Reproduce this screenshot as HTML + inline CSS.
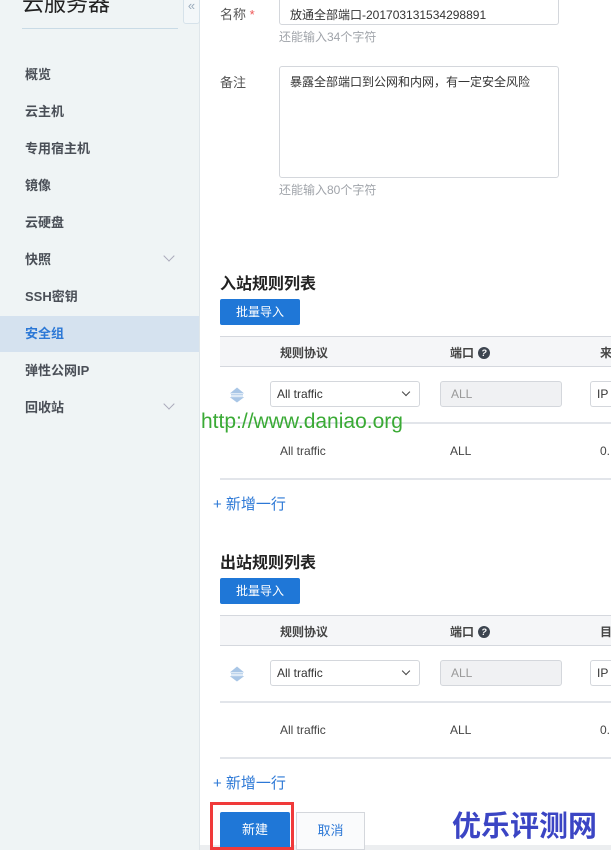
<!DOCTYPE html>
<html><head><meta charset="utf-8"><style>
*{margin:0;padding:0;box-sizing:border-box}
body{width:611px;height:850px;overflow:hidden;position:relative;background:#fff;font-family:"Liberation Sans","Noto Sans CJK SC",sans-serif;font-size:13px;color:#333}
.a{position:absolute}
.side{left:0;top:0;width:200px;height:850px;background:#eff4f5;border-right:1px solid #dfe6ea}
.nav{left:0;width:199px;height:36px;line-height:36px;padding-left:25px;font-weight:bold;color:#4a4f57;font-size:13px}
.chev{position:absolute;right:26px;top:10px;width:8px;height:8px;border-right:1px solid #aab;border-bottom:1px solid #aab;transform:rotate(45deg)}
.inp{border:1px solid #d4d7dc;border-radius:3px;background:#fff}
.hint{color:#a0a4aa;font-size:12px}
.h2{font-size:16px;font-weight:bold;color:#222}
.btn{background:#1f77d7;color:#fff;border-radius:2px;text-align:center;font-size:12px}
.th{left:220px;width:391px;height:31px;background:#f5f6f8;border-top:1px solid #d5d8de;border-bottom:1px solid #d5d8de}
.th span{position:absolute;top:7px;font-weight:bold;color:#444;font-size:12px}
.line{left:220px;width:391px;height:2px;background:#e2e5ea}
.q{display:inline-block;width:12px;height:12px;border-radius:6px;background:#3d4550;color:#fff;font-size:9px;text-align:center;line-height:12px;vertical-align:1px;margin-left:4px}
.sel{width:150px;height:26px;padding-left:6px;line-height:24px;font-size:12px;color:#333}
.sel:after{content:"";position:absolute;right:10px;top:7px;width:5px;height:5px;border-right:1.5px solid #444;border-bottom:1.5px solid #444;transform:rotate(45deg)}
.dis{width:122px;height:26px;background:#f0f1f3;padding-left:10px;line-height:24px;color:#999;font-size:12px}
.ip{width:30px;height:26px;padding-left:6px;line-height:24px;font-size:12px;border-right:none}
.sort{width:16px;height:16px}
.add{color:#2c78d6;font-size:15px}
</style></head><body>
<div class="a side"></div>
<div class="a" style="left:22px;top:-14px;font-size:22px;color:#222">云服务器</div>
<div class="a" style="left:22px;top:28px;width:156px;height:1px;background:#c9dbe6"></div>
<div class="a" style="left:183px;top:-4px;width:17px;height:28px;border:1px solid #d6e2ea;border-radius:3px;background:#f3f7f9;color:#9ab;font-size:13px;text-align:center;line-height:18px">«</div>
<div class="a nav" style="top:57px">概览</div>
<div class="a nav" style="top:94px">云主机</div>
<div class="a nav" style="top:131px">专用宿主机</div>
<div class="a nav" style="top:168px">镜像</div>
<div class="a nav" style="top:205px">云硬盘</div>
<div class="a nav" style="top:242px">快照<i class="chev"></i></div>
<div class="a nav" style="top:279px">SSH密钥</div>
<div class="a nav" style="top:316px;background:#d5e2ef;color:#2c78d6">安全组</div>
<div class="a nav" style="top:353px">弹性公网IP</div>
<div class="a nav" style="top:390px">回收站<i class="chev"></i></div>

<div class="a" style="left:220px;top:4px;color:#555">名称 <span style="color:#e55">*</span></div>
<div class="a inp" style="left:279px;top:-5px;width:280px;height:30px;padding:10px 0 0 10px;font-size:12px">放通全部端口-201703131534298891</div>
<div class="a hint" style="left:279px;top:28px">还能输入34个字符</div>
<div class="a" style="left:220px;top:72px;color:#555">备注</div>
<div class="a inp" style="left:279px;top:66px;width:280px;height:112px;padding:6px 0 0 10px;font-size:12px">暴露全部端口到公网和内网，有一定安全风险</div>
<div class="a hint" style="left:279px;top:181px">还能输入80个字符</div>

<div class="a h2" style="left:220px;top:270px">入站规则列表</div>
<div class="a btn" style="left:220px;top:299px;width:80px;height:26px;line-height:26px">批量导入</div>
<div class="a th" style="top:336px"><span style="left:60px">规则协议</span><span style="left:230px">端口<i class="q">?</i></span><span style="left:380px">来</span></div>
<svg class="a sort" style="left:229px;top:387px" viewBox="0 0 16 16"><path d="M8 1L2 6H14Z M2 7.5H14 M2 9H14 M8 15L2 10.5H14Z" fill="#a9c6e6" stroke="#a9c6e6" stroke-width="0.8"/></svg>
<div class="a inp sel" style="left:270px;top:381px">All traffic</div>
<div class="a inp dis" style="left:440px;top:381px">ALL</div>
<div class="a inp ip" style="left:590px;top:381px">IP</div>
<div class="a line" style="top:422px"></div>
<div class="a" style="left:280px;top:444px;font-size:12px;color:#444">All traffic</div>
<div class="a" style="left:450px;top:444px;font-size:12px;color:#444">ALL</div>
<div class="a" style="left:600px;top:444px;font-size:12px;color:#444">0.</div>
<div class="a line" style="top:478px"></div>
<div class="a add" style="left:213px;top:493px">+ 新增一行</div>
<div class="a" style="left:201px;top:410px;font-size:21px;color:#3aaa35">http://www.daniao.org</div>

<div class="a h2" style="left:220px;top:549px">出站规则列表</div>
<div class="a btn" style="left:220px;top:578px;width:80px;height:26px;line-height:26px">批量导入</div>
<div class="a th" style="top:615px"><span style="left:60px">规则协议</span><span style="left:230px">端口<i class="q">?</i></span><span style="left:380px">目</span></div>
<svg class="a sort" style="left:229px;top:666px" viewBox="0 0 16 16"><path d="M8 1L2 6H14Z M2 7.5H14 M2 9H14 M8 15L2 10.5H14Z" fill="#a9c6e6" stroke="#a9c6e6" stroke-width="0.8"/></svg>
<div class="a inp sel" style="left:270px;top:660px">All traffic</div>
<div class="a inp dis" style="left:440px;top:660px">ALL</div>
<div class="a inp ip" style="left:590px;top:660px">IP</div>
<div class="a line" style="top:701px"></div>
<div class="a" style="left:280px;top:723px;font-size:12px;color:#444">All traffic</div>
<div class="a" style="left:450px;top:723px;font-size:12px;color:#444">ALL</div>
<div class="a" style="left:600px;top:723px;font-size:12px;color:#444">0.</div>
<div class="a line" style="top:757px"></div>
<div class="a add" style="left:213px;top:772px">+ 新增一行</div>

<div class="a" style="left:200px;top:845px;width:411px;height:5px;background:#eceef0"></div>
<div class="a btn" style="left:220px;top:812px;width:70px;height:38px;line-height:36px;font-size:13px">新建</div>
<div class="a" style="left:210px;top:802px;width:84px;height:48px;border:3px solid #f03a3a"></div>
<div class="a" style="left:296px;top:812px;width:69px;height:38px;border:1px solid #d4d7dc;background:#fafbfc;color:#2c78d6;text-align:center;line-height:36px">取消</div>
<div class="a" style="left:452px;top:803px;font-size:29px;font-weight:bold;color:#3b45c4">优乐评测网</div>
</body></html>
